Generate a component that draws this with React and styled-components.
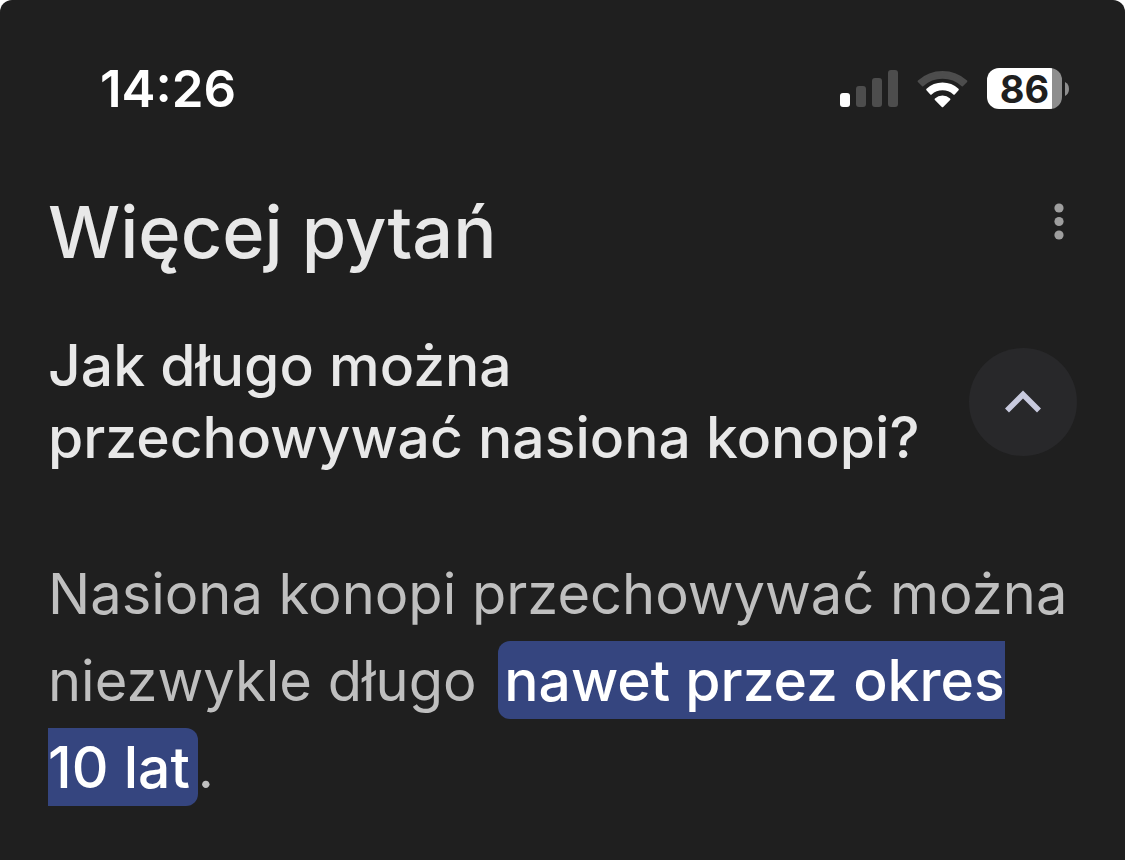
import React from "react";
import styled, { createGlobalStyle } from "styled-components";

const GlobalStyle = createGlobalStyle`
  *, *::before, *::after { box-sizing: border-box; }
  body { margin: 0; background: #ffffff; }
  h1, h2, p { margin: 0; }
`;

const Screen = styled.div`
  min-height: 100vh;
  padding: 58px 48px 48px;
  border-radius: 12px 12px 0 0;
  background: #1f1f1f;
  color: #e8e8e8;
  font-family: Inter, "Liberation Sans", sans-serif;
`;

const StatusBar = styled.header`
  display: flex;
  align-items: center;
  justify-content: space-between;
  height: 61px;
  padding: 0 8px 0 52px;
  color: #ffffff;
`;

const Clock = styled.time`
  font-size: 51px;
  font-weight: 600;
  line-height: 62px;
`;

const Indicators = styled.div`
  display: flex;
  align-items: center;
  gap: 19px;
`;

const Battery = styled.div`
  display: flex;
  align-items: center;
  gap: 3px;
`;

const BatteryBody = styled.div`
  display: flex;
  align-items: center;
  justify-content: center;
  width: 75px;
  height: 41px;
  border-radius: 12px;
  background: linear-gradient(to right, #ffffff 87%, #8e8e8e 87%);
  color: #1f1f1f;
  font-size: 38px;
  font-weight: 700;
  line-height: 40px;
`;

const TitleRow = styled.div`
  display: flex;
  align-items: flex-start;
  justify-content: space-between;
  margin-top: 67px;
`;

const Title = styled.h1`
  font-size: 72px;
  font-weight: 500;
  line-height: 92px;
`;

const MenuButton = styled.button`
  display: flex;
  margin: 17px 13px 0 0;
  padding: 0;
  border: 0;
  background: none;
  color: #9e9e9e;
  cursor: pointer;
`;

const QuestionRow = styled.div`
  display: flex;
  align-items: center;
  justify-content: space-between;
  margin-top: 52px;
`;

const Question = styled.h2`
  font-size: 57px;
  font-weight: 500;
  line-height: 72px;
  white-space: nowrap;
`;

const ToggleButton = styled.button`
  display: flex;
  flex: none;
  align-items: center;
  justify-content: center;
  width: 108px;
  height: 108px;
  padding: 0;
  border: 0;
  border-radius: 50%;
  background: #28282a;
  color: #c8cade;
  cursor: pointer;
`;

const Answer = styled.p`
  margin-top: 77px;
  color: #bfbfbf;
  font-size: 56px;
  line-height: 87px;
  white-space: nowrap;
`;

const Highlight = styled.mark`
  margin-left: 6px;
  padding: 5px 8px 4px 6px;
  border-radius: 12px;
  background: #35457f;
  color: #ffffff;
  font-size: 57px;
  font-weight: 500;
  line-height: 80px;
`;

function SignalIcon() {
  return (
    <svg width="58" height="38" viewBox="0 0 58 38" role="img" aria-label="Zasięg">
      <rect x="0" y="23" width="10" height="14" rx="3" fill="#fff" />
      <rect x="16" y="16" width="10" height="21" rx="3" fill="#4d4d4d" />
      <rect x="32" y="8" width="10" height="29" rx="3" fill="#4d4d4d" />
      <rect x="48" y="0" width="10" height="37" rx="3" fill="#4d4d4d" />
    </svg>
  );
}

function WifiIcon() {
  return (
    <svg width="51" height="38" viewBox="0 0 51 38" role="img" aria-label="Wi-Fi">
      <g strokeWidth="2" strokeLinejoin="round">
        <path
          d="M1.6 11.2A35.5 35.5 0 0 1 49.4 11.2L45.4 15.4A29.6 29.6 0 0 0 5.6 15.4Z"
          fill="#4d4d4d"
          stroke="#4d4d4d"
        />
        <path
          d="M10.2 19.6A22.5 22.5 0 0 1 40.8 19.6L37 23.8A17 17 0 0 0 14 23.8Z"
          fill="#fff"
          stroke="#fff"
        />
        <path d="M18.6 29.2A10.2 10.2 0 0 1 32.4 29.2L25.5 36.2Z" fill="#fff" stroke="#fff" />
      </g>
    </svg>
  );
}

function BatteryTip() {
  return (
    <svg width="4" height="14" viewBox="0 0 4 14" aria-hidden="true">
      <path d="M0 0Q4 2 4 7T0 14Z" fill="#8e8e8e" />
    </svg>
  );
}

function DotsIcon() {
  return (
    <svg width="10" height="38" viewBox="0 0 10 38" aria-hidden="true" fill="currentColor">
      <circle cx="5" cy="5" r="4.6" />
      <circle cx="5" cy="18.5" r="4.6" />
      <circle cx="5" cy="32" r="4.6" />
    </svg>
  );
}

function ChevronIcon() {
  return (
    <svg width="36" height="24" viewBox="0 0 36 24" aria-hidden="true">
      <path d="M2 20.5L18 4.5L34 20.5" fill="none" stroke="currentColor" strokeWidth="5.6" />
    </svg>
  );
}

export default function App() {
  return (
    <>
      <GlobalStyle />
      <Screen>
        <StatusBar>
          <Clock>14:26</Clock>
          <Indicators>
            <SignalIcon />
            <WifiIcon />
            <Battery>
              <BatteryBody>86</BatteryBody>
              <BatteryTip />
            </Battery>
          </Indicators>
        </StatusBar>
        <main>
          <TitleRow>
            <Title>Więcej pytań</Title>
            <MenuButton type="button" aria-label="Więcej opcji">
              <DotsIcon />
            </MenuButton>
          </TitleRow>
          <QuestionRow>
            <Question>
              Jak długo można
              <br />
              przechowywać nasiona konopi?
            </Question>
            <ToggleButton type="button" aria-label="Zwiń odpowiedź" aria-expanded="true">
              <ChevronIcon />
            </ToggleButton>
          </QuestionRow>
          <Answer>
            Nasiona konopi przechowywać można
            <br />
            niezwykle długo{" "}
            <Highlight>
              nawet przez okres
              <br />
              10 lat
            </Highlight>
            .
          </Answer>
        </main>
      </Screen>
    </>
  );
}
